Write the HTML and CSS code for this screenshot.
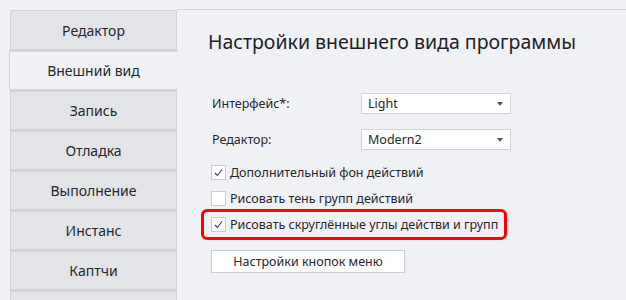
FILE: index.html
```html
<!DOCTYPE html>
<html lang="ru">

<head>
  <meta charset="UTF-8">
  <title>Настройки</title>
  <link rel="stylesheet" href="styles.css">
</head>

<body>
  <div class="window">
    <nav class="tabs">
      <div class="tab">Редактор</div>
      <div class="tab active">Внешний вид</div>
      <div class="tab">Запись</div>
      <div class="tab">Отладка</div>
      <div class="tab">Выполнение</div>
      <div class="tab">Инстанс</div>
      <div class="tab">Каптчи</div>
      <div class="tab"></div>
    </nav>

    <main class="panel">
      <h1 class="panel-title">Настройки внешнего вида программы</h1>

      <div class="form-row">
        <label class="field-label">Интерфейс*:</label>
        <div class="select">Light<span class="caret"></span></div>
      </div>
      <div class="form-row">
        <label class="field-label">Редактор:</label>
        <div class="select">Modern2<span class="caret"></span></div>
      </div>

      <div class="checks">
        <label class="check">
          <span class="box"><svg viewBox="0 0 13 13"><path d="M3 7 L5.5 9.5 L10 3.5" /></svg></span>
          Дополнительный фон действий
        </label>
        <label class="check">
          <span class="box"></span>
          Рисовать тень групп действий
        </label>
        <label class="check marked">
          <span class="box"><svg viewBox="0 0 13 13"><path d="M3 7 L5.5 9.5 L10 3.5" /></svg></span>
          Рисовать скруглённые углы действи и групп
        </label>
      </div>

      <button class="menu-btn">Настройки кнопок меню</button>
    </main>
  </div>
</body>

</html>
```

FILE: styles.css
```css
:root {
  --page-bg: #f0f1f5;
  --tab-bg: #e3e4e8;
  --border: #d0d3da;
  --text: #25272d;
}

* {
  margin: 0;
  padding: 0;
  box-sizing: border-box;
}

body {
  font-family: 'Noto Sans', 'Liberation Sans', sans-serif;
  background: var(--page-bg);
  color: var(--text);
  height: 300px;
  overflow: hidden;
}

.window {
  display: flex;
  padding-top: 9px;
}

.tabs {
  width: 177px;
  padding: 1px 0 0 10px;
  display: flex;
  flex-direction: column;
}

.tab {
  height: 40px;
  flex-shrink: 0;
  border: 1px solid var(--border);
  border-top-width: 2px;
  background: var(--tab-bg);
  font-size: 14px;
  display: flex;
  align-items: center;
  justify-content: center;
}

.tab:first-child {
  border-top-width: 1px;
}

.tab.active {
  background: var(--page-bg);
  margin-left: -1px;
  margin-right: -1px;
  border-right-color: var(--page-bg);
  position: relative;
  z-index: 1;
}

.panel {
  flex: 1;
  border-top: 1px solid var(--border);
  padding: 18px 0 0 31px;
}

.panel-title {
  font-size: 19.5px;
  font-weight: 400;
  color: #1e2128;
  margin-bottom: 38px;
}

.form-row {
  display: flex;
  align-items: center;
  margin-bottom: 15px;
}

.field-label {
  width: 153px;
  padding-left: 4px;
  font-size: 12.5px;
}

.select {
  width: 150px;
  height: 21px;
  background: #fff;
  border: 1px solid var(--border);
  font-size: 12.5px;
  padding-left: 6px;
  display: flex;
  align-items: center;
  position: relative;
}

.caret {
  position: absolute;
  right: 7px;
  top: 8px;
  border-left: 3px solid transparent;
  border-right: 3px solid transparent;
  border-top: 4px solid #555;
}

.checks {
  display: flex;
  flex-direction: column;
  align-items: flex-start;
  gap: 9px;
  padding-left: 3px;
  margin-top: -1px;
}

.check {
  display: flex;
  align-items: center;
  gap: 4px;
  font-size: 12.5px;
  line-height: 17px;
}

.box {
  width: 15px;
  height: 15px;
  background: #fff;
  border: 1px solid #c9ccd3;
  display: flex;
}

.box svg {
  width: 13px;
  height: 13px;
  fill: none;
  stroke: #3a3d44;
  stroke-width: 1.1;
}

.check.marked {
  border: 3px solid #ff0000;
  border-radius: 6px;
  padding: 4px 6px 4px 7px;
  margin: -7px -10px -7px -10px;
}

.menu-btn {
  margin: 17px 0 0 3px;
  width: 194px;
  height: 23px;
  background: #fff;
  border: 1px solid #c9ccd3;
  font-family: inherit;
  font-size: 12.5px;
  color: var(--text);
}
```
